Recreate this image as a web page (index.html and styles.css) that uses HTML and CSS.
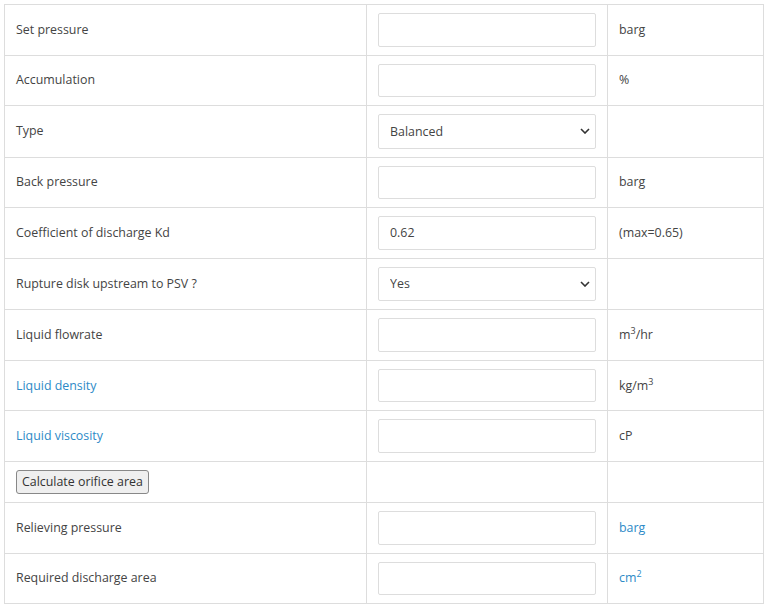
FILE: index.html
```html
<!DOCTYPE html>
<html lang="en">
<head>
	<meta charset="UTF-8">
	<title>Liquid relief valve sizing</title>
	<link rel="stylesheet" href="styles.css">
</head>
<body>
	<table class="calc">
		<colgroup>
			<col class="c-label">
			<col class="c-input">
			<col class="c-unit">
		</colgroup>
		<tr>
			<td>Set pressure</td>
			<td><input type="text" class="field"></td>
			<td>barg</td>
		</tr>
		<tr>
			<td>Accumulation</td>
			<td><input type="text" class="field"></td>
			<td>%</td>
		</tr>
		<tr>
			<td>Type</td>
			<td>
				<select class="field pick">
					<option>Balanced</option>
					<option>Conventional</option>
				</select>
			</td>
			<td></td>
		</tr>
		<tr>
			<td>Back pressure</td>
			<td><input type="text" class="field"></td>
			<td>barg</td>
		</tr>
		<tr>
			<td>Coefficient of discharge Kd</td>
			<td><input type="text" class="field" value="0.62"></td>
			<td>(max=0.65)</td>
		</tr>
		<tr>
			<td>Rupture disk upstream to PSV ?</td>
			<td>
				<select class="field pick">
					<option>Yes</option>
					<option>No</option>
				</select>
			</td>
			<td></td>
		</tr>
		<tr>
			<td>Liquid flowrate</td>
			<td><input type="text" class="field"></td>
			<td>m<sup>3</sup>/hr</td>
		</tr>
		<tr>
			<td><a href="#" class="link">Liquid density</a></td>
			<td><input type="text" class="field"></td>
			<td>kg/m<sup>3</sup></td>
		</tr>
		<tr>
			<td><a href="#" class="link">Liquid viscosity</a></td>
			<td><input type="text" class="field"></td>
			<td>cP</td>
		</tr>
		<tr class="btn-row">
			<td><button class="btn">Calculate orifice area</button></td>
			<td></td>
			<td></td>
		</tr>
		<tr>
			<td>Relieving pressure</td>
			<td><input type="text" class="field"></td>
			<td><a href="#" class="link">barg</a></td>
		</tr>
		<tr>
			<td>Required discharge area</td>
			<td><input type="text" class="field"></td>
			<td><a href="#" class="link">cm<sup>2</sup></a></td>
		</tr>
	</table>
</body>
</html>
```

FILE: styles.css
```css
body {
	margin: 4px;
	background: #fff;
	font-family: "Open Sans", Arial, sans-serif;
	font-size: 12.4px;
	color: #444;
}
.calc {
	width: 760px;
	table-layout: fixed;
	border-collapse: collapse;
}
.c-label {
	width: 362px;
}
.c-input {
	width: 241px;
}
.calc td {
	border: 1px solid #ddd;
	padding: 8px 11px;
	vertical-align: middle;
	line-height: 18px;
}
.btn-row td {
	height: 24px;
}
.field {
	box-sizing: border-box;
	display: block;
	width: 218px;
	height: 33.6px;
	padding: 6px 11px;
	border: 1px solid #ddd;
	border-radius: 2px;
	background: #fff;
	font-family: inherit;
	font-size: 12.4px;
	color: #444;
}
.pick {
	height: 34.4px;
	appearance: none;
	-webkit-appearance: none;
	padding-right: 28px;
	background-image: url("data:image/svg+xml,%3Csvg xmlns='http://www.w3.org/2000/svg' width='10' height='6' viewBox='0 0 10 6'%3E%3Cpath d='M1 1l4 4 4-4' fill='none' stroke='%23333' stroke-width='1.6'/%3E%3C/svg%3E");
	background-repeat: no-repeat;
	background-position: right 5px center;
}
.link {
	color: #2d8ac7;
	text-decoration: none;
}
sup {
	font-size: 9px;
	line-height: 0;
}
.btn {
	font-family: inherit;
	font-size: 12.4px;
	color: #333;
	background: #efefef;
	border: 1px solid #888;
	border-radius: 3px;
	padding: 2px 5px;
	height: 24px;
	line-height: 18px;
}
```
